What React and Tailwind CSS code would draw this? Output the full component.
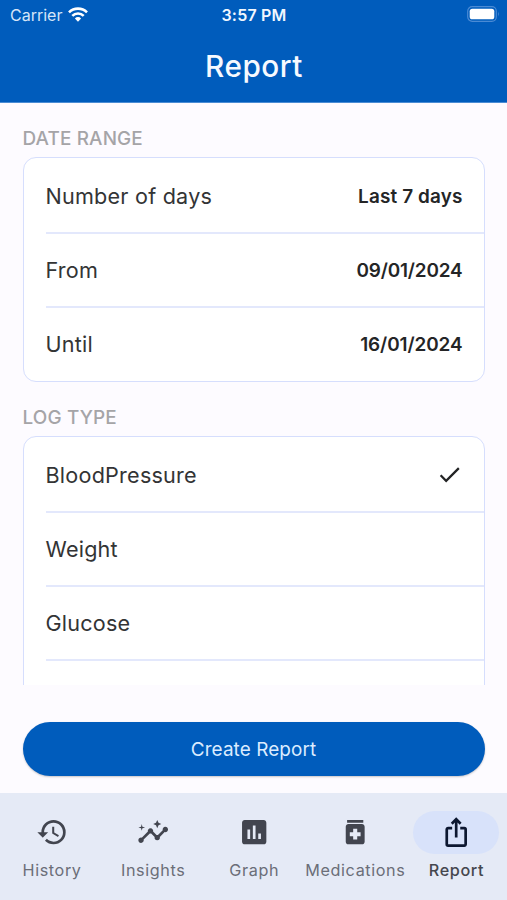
import { MdHistory, MdInsights, MdAssessment, MdMedication, MdIosShare, MdCheck } from "react-icons/md";

const dateRows = [
  { label: "Number of days", value: "Last 7 days", spacing: "tracking-[0.15px]" },
  { label: "From", value: "09/01/2024", spacing: "tracking-[-0.15px]" },
  { label: "Until", value: "16/01/2024", spacing: "tracking-[-0.08px]" },
];

const logTypes = ["BloodPressure", "Weight", "Glucose"];

const tabs = [
  { label: "History", Icon: MdHistory },
  { label: "Insights", Icon: MdInsights },
  { label: "Graph", Icon: MdAssessment },
  { label: "Medications", Icon: MdMedication },
  { label: "Report", Icon: MdIosShare, active: true },
];

function StatusBar() {
  return (
    <div className="grid h-[28px] grid-cols-3 items-center pr-[7px] pl-[10px] text-white">
      <div className="flex items-center gap-[6px]">
        <span className="pt-px text-[16px] leading-none text-[#d5e5f8]">Carrier</span>
        <svg viewBox="0 0 20 15" className="h-[15px] w-5" fill="none" stroke="white" strokeWidth="2.6">
          <path d="M1 5.3a12.8 12.8 0 0 1 18 0" />
          <path d="M4.3 8.8a8.1 8.1 0 0 1 11.4 0" />
          <path d="M10 14.7 6.9 11.4a4.4 4.4 0 0 1 6.2 0Z" fill="white" stroke="none" />
        </svg>
      </div>
      <span className="pt-px pr-[2px] text-center text-[16px] leading-none font-semibold tracking-[0.2px] text-[#f1f7ff]">3:57 PM</span>
      <svg viewBox="0 0 33 16" className="h-4 w-[33px] justify-self-end">
        <rect x="0.7" y="0.7" width="28.6" height="14.6" rx="4.5" fill="none" stroke="#4a8ad4" strokeWidth="1.2" />
        <rect x="2.7" y="2.7" width="24.6" height="10.6" rx="2.6" fill="white" />
        <path d="M31 5.6q1.7 2.4 0 4.8Z" fill="#4a8ad4" />
      </svg>
    </div>
  );
}

function Row({ label, children, last }) {
  return (
    <div className="pl-[22px]">
      <div className={`flex h-[74px] items-center justify-between border-b-2 pt-px pr-[21px] ${last ? "border-transparent" : "border-[#e3e8fc]"}`}>
        <span className="text-[21.6px] leading-none tracking-[0.22px] text-[#333435]">{label}</span>
        {children}
      </div>
    </div>
  );
}

export default function App() {
  return (
    <div className="flex h-[900px] w-[507px] flex-col overflow-hidden bg-[#fdfbff] font-['Inter','Liberation_Sans',sans-serif]">
      <header className="h-[103px] shrink-0 border-b border-[#4b8cd4] bg-[#005cbc]">
        <StatusBar />
        <h1 className="mt-[20px] pl-px text-center text-[29.7px] leading-9 font-medium tracking-[0.55px] text-[#f7faff]">Report</h1>
      </header>

      <main className="flex h-[582px] shrink-0 flex-col overflow-hidden px-[22.5px] pt-[24px]">
        <h2 className="h-[30px] shrink-0 text-[18.9px] leading-[24px] font-medium tracking-[0.15px] text-[#a5a4a7]">DATE RANGE</h2>
        <section className="h-[225px] shrink-0 rounded-[13px] border border-[#d6defd] bg-white pt-[2px]">
          {dateRows.map(({ label, value, spacing }, i) => (
            <Row key={label} label={label} last={i === dateRows.length - 1}>
              <span className={`pt-px text-[18.9px] leading-none font-semibold text-[#242526] ${spacing}`}>{value}</span>
            </Row>
          ))}
        </section>
        <h2 className="mt-[24px] h-[30px] shrink-0 text-[18.9px] leading-[24px] font-medium tracking-[0.15px] text-[#a5a4a7]">LOG TYPE</h2>
        <section className="h-[299px] shrink-0 rounded-[13px] border border-[#d6defd] bg-white pt-[2px]">
          {logTypes.map((label, i) => (
            <Row key={label} label={label}>
              {i === 0 && <MdCheck className="mb-[2px] size-[27px] text-[#222324]" />}
            </Row>
          ))}
        </section>
      </main>

      <div className="px-[22.5px] pt-[37px]">
        <button className="h-[54px] w-full rounded-full bg-[#005cbc] pt-[2px] text-[18.9px] tracking-[0.1px] text-[#dcecff] shadow-[0_1px_2px_rgba(0,0,0,0.22)]">
          Create Report
        </button>
      </div>

      <nav className="mt-auto grid h-[107.5px] grid-cols-5 bg-[#e5eaf6] pt-[18.5px] pl-[1.5px]">
        {tabs.map(({ label, Icon, active }) => (
          <div key={label} className="flex flex-col items-center">
            <div className={`flex h-[43px] w-[86px] items-center justify-center rounded-full ${active ? "bg-[#d8e2fa] text-[#0c1730]" : "text-[#42454f]"}`}>
              <Icon className="size-[32.4px]" />
            </div>
            <span className={`mt-[6px] text-[16.2px] leading-5 tracking-[0.6px] whitespace-nowrap ${active ? "font-medium text-[#45474e]" : "text-[#6b6e78]"}`}>{label}</span>
          </div>
        ))}
      </nav>
    </div>
  );
}
